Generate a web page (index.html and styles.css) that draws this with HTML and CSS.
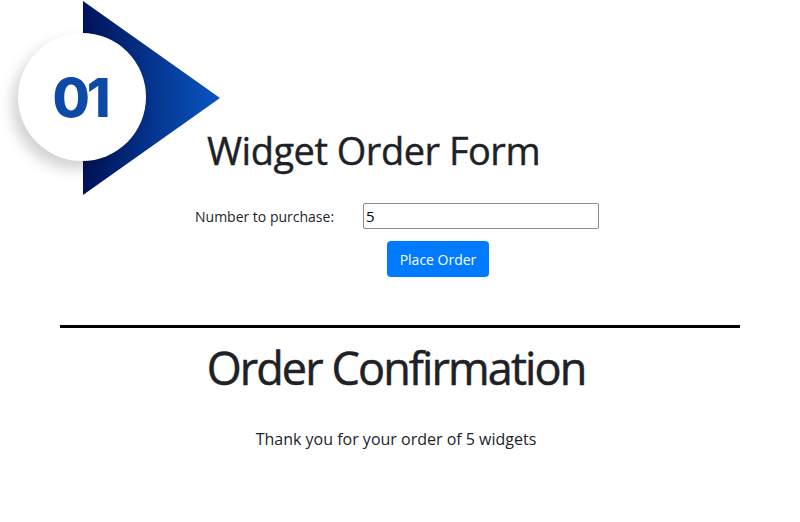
FILE: index.html
```html
<!DOCTYPE html>
<html>
<head>
<meta charset="utf-8">
<link rel="stylesheet" href="styles.css">
</head>
<body>
<div class="page">
  <div class="badge">
    <svg class="arrow" width="140" height="200" viewBox="0 0 140 200">
      <defs>
        <linearGradient id="g" x1="0" y1="0" x2="1" y2="0">
          <stop offset="0" stop-color="#001259"/>
          <stop offset="1" stop-color="#0a56c2"/>
        </linearGradient>
      </defs>
      <polygon points="0,1 137,98 0,195" fill="url(#g)"/>
    </svg>
    <div class="circle"><span class="num">01</span></div>
  </div>

  <section class="form-section">
    <h1 class="title">Widget Order Form</h1>
    <div class="row">
      <label class="label" for="qty">Number to purchase:</label>
      <input class="input" id="qty" type="text" value="5">
    </div>
    <div class="actions">
      <button class="btn">Place Order</button>
    </div>
  </section>

  <hr class="divider">

  <section class="confirm">
    <h2 class="confirm-title">Order Confirmation</h2>
    <p class="thanks">Thank you for your order of 5 widgets</p>
  </section>
</div>
</body>
</html>
```

FILE: styles.css
```css
* { box-sizing: border-box; }
html, body {
  margin: 0;
  padding: 0;
  background: #ffffff;
}
body {
  font-family: "Open Sans", "Noto Sans", sans-serif;
  color: #212529;
  width: 800px;
  height: 522px;
  overflow: hidden;
}
.page {
  position: relative;
  width: 800px;
  height: 522px;
}
.badge {
  position: absolute;
  left: 0;
  top: 0;
  width: 230px;
  height: 200px;
}
.arrow {
  position: absolute;
  left: 83px;
  top: 0;
}
.circle {
  position: absolute;
  left: 18px;
  top: 33px;
  width: 128px;
  height: 128px;
  border-radius: 50%;
  background: #ffffff;
  box-shadow: -6px 8px 14px rgba(0, 0, 0, 0.18);
  display: flex;
  align-items: center;
  justify-content: center;
}
.num {
  font-family: Inter, "Liberation Sans", sans-serif;
  font-weight: 800;
  font-size: 54px;
  letter-spacing: -3px;
  color: #0d4aa8;
  line-height: 1;
  margin-left: -4px;
  margin-top: 2px;
}
.form-section {
  padding-top: 126px;
  display: flex;
  flex-direction: column;
}
.title {
  margin: 0 0 0 207px;
  font-family: "Open Sans", sans-serif;
  font-size: 38px;
  font-weight: 400;
  letter-spacing: -0.5px;
  line-height: 48px;
  color: #1e2125;
  -webkit-text-stroke: 0.4px #1e2125;
}
.row {
  display: flex;
  align-items: center;
  margin-top: 29px;
  padding-left: 195px;
}
.label {
  font-size: 14px;
  width: 168px;
  color: #212529;
}
.input {
  width: 236px;
  height: 26px;
  border: 1px solid #8a8a8a;
  border-radius: 2px;
  padding: 0 2px;
  font-family: "Open Sans", sans-serif;
  font-size: 15px;
  color: #000;
}
.actions {
  margin-top: 12px;
  padding-left: 387px;
}
.btn {
  width: 102px;
  height: 36px;
  background: #007bff;
  color: #ffffff;
  border: none;
  border-radius: 4px;
  font-family: "Open Sans", sans-serif;
  font-size: 14px;
  padding: 0;
}
.divider {
  margin: 48px 60px 0;
  border: none;
  height: 3px;
  background: #000;
}
.confirm {
  text-align: center;
}
.confirm-title {
  margin: 12px 0 0 -8px;
  font-family: "Open Sans", sans-serif;
  font-size: 45px;
  font-weight: 400;
  letter-spacing: -1.9px;
  line-height: 56px;
  color: #1e2125;
  -webkit-text-stroke: 0.5px #1e2125;
}
.thanks {
  margin: 32px 0 0 -8px;
  font-size: 16px;
  color: #212529;
}
```
